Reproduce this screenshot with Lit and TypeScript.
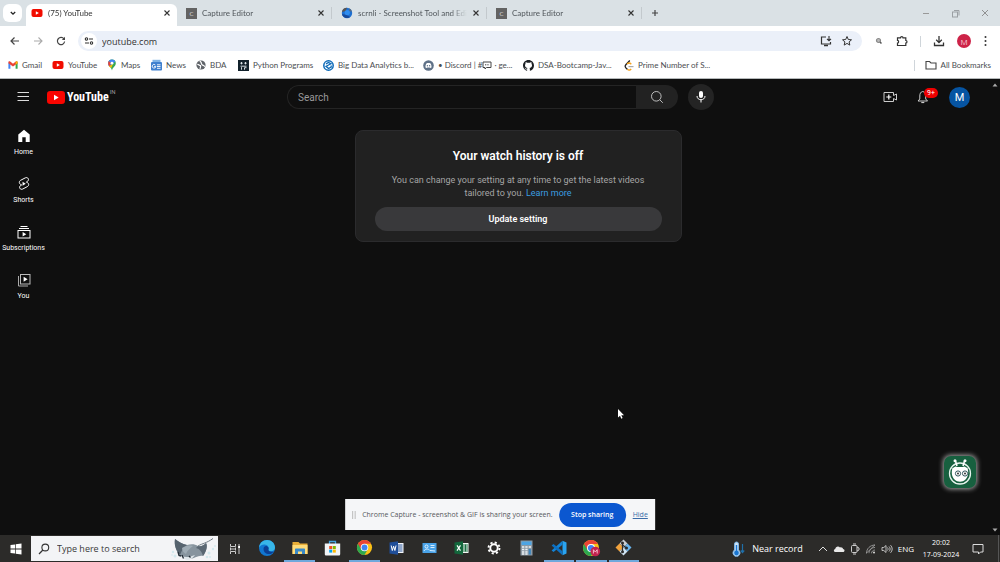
import { LitElement, html, css, svg } from "lit";
import { customElement, property } from "lit/decorators.js";

const i = (w: number, h: number, box: string, body: unknown) =>
  html`<svg width=${w} height=${h} viewBox=${box} fill="none" aria-hidden="true">${body}</svg>`;

const closeIcon = i(8, 8, "0 0 8 8", svg`<path d="M1.5 1.5l5 5M6.5 1.5l-5 5" stroke="#333" stroke-width="1.1"/>`);
const ytIcon = i(12, 12, "0 0 12 12", svg`<rect x="0.5" y="2" width="11" height="8" rx="2" fill="#f10c00"/><path d="M4.8 4.2v3.6L7.9 6z" fill="#fff"/>`);
const captureIcon = html`<span class="cap">C</span>`;
const scrnliIcon = i(12, 12, "0 0 12 12", svg`<circle cx="6" cy="6" r="5.2" fill="#1e6fd0"/><path d="M1 5a5 5 0 0 1 5-4.2L4.5 4z" fill="#5a5550"/><path d="M1 7a5 5 0 0 0 8 3L6 8z" fill="#174a9c"/><circle cx="6.3" cy="5.6" r="2.6" fill="#2f8df0"/><path d="M8 1.3a5 5 0 0 1 3 3.5L8.500 4z" fill="#5a6b7d"/>`);

const bookmarks = [
  { label: "Gmail", icon: i(10, 10, "0 0 10 10", svg`<path d="M0.4 2.4L2.400 3.900V8.700H0.400z" fill="#4285f4"/><path d="M9.600 2.400L7.600 3.900V8.700H9.600z" fill="#34a853"/><path d="M0.400 2.300C.4 1.300 1.500 1 2.200 1.600L5 3.800L7.800 1.600C8.500 1 9.600 1.300 9.600 2.300V3.200L5 6.600L.4 3.200z" fill="#ea4335"/><path d="M7.600 1.800L8.200 1.400C8.900 1.100 9.600 1.500 9.600 2.300V3.200L7.600 4.700z" fill="#fbbc04"/>`) },
  { label: "YouTube", icon: ytIcon },
  { label: "Maps", icon: i(10, 12, "0 0 10 12", svg`<path d="M5 .5a3.800 3.800 0 0 1 3.800 3.800C8.800 7.500 5.700 8 5 11.500C4.300 8 1.200 7.500 1.200 4.300A3.800 3.800 0 0 1 5 .5z" fill="#34a853"/><path d="M5 .5a3.800 3.800 0 0 1 3.400 2L2 7.300C1.500 6.500 1.200 5.500 1.200 4.300A3.800 3.800 0 0 1 5 .5z" fill="#4285f4"/><path d="M1.800 1.900L4 4L2.400 7.700C1.700 6.700 1.200 5.700 1.200 4.300C1.200 3.400 1.400 2.500 1.800 1.900z" fill="#ea4335"/><path d="M2 7.300L6 4.800L4.300 9C3.500 8 2.600 8 2 7.300z" fill="#fbbc04"/><circle cx="5" cy="4.200" r="1.400" fill="#fff"/>`) },
  { label: "News", icon: i(11, 12, "0 0 11 12", svg`<path d="M1.500 3V.8H9.500V3" fill="#7fb3e6"/><rect x="0" y="3" width="11" height="8.500" rx="1" fill="#3f80cf"/><path d="M4.300 6A1.800 1.800 0 1 0 4.800 7.500H3.200M6 5.800h3.500M6 7.500h3.500M6 9.300h3.500" stroke="#fff" stroke-width=".9"/>`) },
  { label: "BDA", icon: i(10, 10, "0 0 10 10", svg`<circle cx="5" cy="5" r="4.600" fill="#5f6368"/><path d="M1.300 4.500C3 4.200 3 5.700 4.500 5.600C5 6.800 4 7.200 4.200 8.900M4 .8C4 2 5.500 2 5.300 3C5 4 6.200 4.200 6.500 5.200C8 5 8 6.400 9 6.300" stroke="#fff" stroke-width="1.200"/>`) },
  { label: "Python Programs", icon: i(11, 11, "0 0 11 11", svg`<rect width="11" height="11" fill="#11212b"/><path d="M3.500 2v2.400M2.300 3.200h2.400M7.500 2v2.400M6.300 3.200h2.400M2.500 6.200h6M3.500 7.200v2.500M6.500 9.700V7.700H8.500" stroke="#e6eef2" stroke-width=".9"/>`) },
  { label: "Big Data Analytics b...", icon: i(11, 11, "0 0 11 11", svg`<circle cx="5.500" cy="5.500" r="4.700" stroke="#0c6ab8" stroke-width="1.500"/><path d="M3 3.800l2.500-1.300L8 3.800L5.500 5L3 6.300L5.500 8.500L8.200 7V5.500" stroke="#0c6ab8" stroke-width="1.300"/>`) },
  { label: "Discord", discord: true, icon: i(11, 11, "0 0 11 11", svg`<circle cx="5.500" cy="5.500" r="5.300" fill="#5f7187"/><path d="M2.500 7.500C2.400 5.800 2.800 4.300 3.400 3.500C4.700 2.900 6.300 2.900 7.600 3.500C8.200 4.300 8.600 5.800 8.500 7.500L7.200 8.100L6.700 7.400H4.300L3.800 8.100z" fill="#fff"/><circle cx="4.400" cy="5.700" r=".7" fill="#5f7187"/><circle cx="6.600" cy="5.700" r=".7" fill="#5f7187"/>`) },
  { label: "DSA-Bootcamp-Jav...", icon: i(11, 11, "0 0 16 16", svg`<path fill="#1b1f23" d="M8 0C3.580 0 0 3.580 0 8c0 3.540 2.290 6.530 5.470 7.590.4.070.55-.17.55-.38 0-.19-.01-.82-.01-1.490-2.010.37-2.530-.49-2.690-.94-.09-.23-.48-.94-.82-1.130-.28-.15-.68-.52-.01-.53.63-.01 1.080.58 1.230.82.72 1.210 1.870.87 2.330.66.07-.52.28-.87.51-1.070-1.780-.2-3.640-.89-3.640-3.950 0-.87.31-1.590.82-2.150-.08-.2-.36-1.020.08-2.120 0 0 .67-.21 2.200.82a7.500 7.500 0 0 1 4 0c1.530-1.040 2.200-.82 2.200-.82.44 1.100.16 1.920.08 2.120.51.56.82 1.270.82 2.150 0 3.070-1.870 3.750-3.650 3.950.29.25.54.73.54 1.480 0 1.070-.01 1.930-.01 2.200 0 .21.15.46.55.38A8 8 0 0 0 16 8c0-4.420-3.580-8-8-8z"/>`) },
  { label: "Prime Number of S...", icon: i(10, 11, "0 0 10 11", svg`<path d="M5.800.5L2 4.500C1 5.600 1 7 2 8L3.500 9.400" stroke="#222" stroke-width="1.300"/><path d="M3.400 9.300C4.600 10.500 6 10.300 7.200 9M3 4C4.600 2.600 6 2.800 7.300 4.200" stroke="#f6a21b" stroke-width="1.300"/><path d="M4.500 6.600h5" stroke="#aaa" stroke-width="1.200"/>`) },
];

const side = [
  { label: "Home", icon: i(14, 14, "0 0 14 14", svg`<path d="M7 .8L1.300 5.600V13H5.300V8.300H8.700V13H12.700V5.600z" fill="#fff"/>`) },
  { label: "Shorts", icon: i(14, 14, "0 0 24 24", svg`<path d="M17 9.200l-1-.4c-.3-.1.900-.7 1.500-1.100 2-1 2.700-3 1.900-4.700-1-1.900-3.200-2.500-5-1.600L6.300 5.600C4.800 6.400 3.900 7.800 4 9.500c.1 1.600 1.300 3 3 3.700l1 .4-1.400.8c-2 1-2.700 3-1.900 4.700 1 1.900 3.200 2.500 5 1.600l8-4.200c1.500-.8 2.400-2.200 2.300-3.800-.1-1.600-1.300-2.900-3-3.500z" stroke="#fff" stroke-width="1.700"/><path d="M9.500 8.300v6.800l5.500-3.400z" fill="#fff"/>`) },
  { label: "Subscriptions", icon: i(14, 14, "0 0 14 14", svg`<path d="M3.500 1.500h7M2 3.500h10" stroke="#fff"/><rect x="1" y="5.500" width="12" height="7.500" stroke="#fff"/><path d="M5.600 7v4.500L9.300 9.200z" fill="#fff"/>`) },
  { label: "You", icon: i(14, 14, "0 0 14 14", svg`<path d="M1.500 3v10H11" stroke="#aaa"/><rect x="3.500" y="1.500" width="9.500" height="9.500" stroke="#bbb"/><path d="M6.600 3.700v5L10.600 6.200z" fill="#fff"/>`) },
];

const chromeShapes = svg`<circle cx="9" cy="9" r="8" fill="#fbc116"/><path d="M9 9L2.100 5A8 8 0 0 0 9 17L12.500 10.800z" fill="#2da94f"/><path d="M2.100 5A8 8 0 0 1 15.900 5H9L5.500 11z" fill="#ea4335"/><circle cx="9" cy="9" r="4" fill="#fff"/><circle cx="9" cy="9" r="3.100" fill="#3f83f2"/>`;

const apps = [
  { name: "Edge", icon: i(18, 18, "0 0 18 18", svg`<circle cx="9" cy="9" r="8" fill="#1177d1"/><path d="M1 8.500C1.500 4 5 1 9 1C13.500 1 17 4.500 17 8.500C17 11 15.200 12.300 13 12.300C11 12.300 10 11.500 10.500 10.300C11.500 8.500 9.500 5.500 6.500 5.500C3.500 5.500 1.800 7 1 8.500z" fill="#38b6e8"/><path d="M5.500 10C5.500 7.500 7.500 6.600 9 7.200C10.700 8 10.900 9.500 10.400 10.500C10 12 12 13.400 15.800 12.500C13.500 16.500 5.800 16 5.500 10z" fill="#0b3f94"/>`) },
  { name: "File Explorer", on: true, icon: i(16, 16, "0 0 16 16", svg`<path d="M.5 2h6l1.500 1.500h7.500V14H.5z" fill="#e9ae38"/><path d="M.5 5h15v9H.5z" fill="#ffdc7a"/><path d="M3 14V9.500C3 8.800 3.400 8.500 4 8.500h8c.6 0 1 .3 1 1V14h-3v-2.500H6V14z" fill="#3a89c8"/>`) },
  { name: "Store", icon: i(17, 16, "0 0 17 16", svg`<path d="M5.500 4V1.500h6V4" stroke="#43a4df" stroke-width="1.300"/><path d="M.8 3.500h15.400V14c0 1-.6 1.500-1.500 1.500H2.300C1.400 15.500.8 15 .8 14z" fill="#f1f4f6"/><path d="M5.200 6h3v3h-3z" fill="#f25022"/><path d="M8.800 6h3v3h-3z" fill="#7fba00"/><path d="M5.200 9.600h3v3h-3z" fill="#00a4ef"/><path d="M8.800 9.600h3v3h-3z" fill="#ffb900"/>`) },
  { name: "Chrome", on: true, icon: i(17, 17, "0 0 18 18", chromeShapes) },
  { name: "Word", icon: i(15, 14, "0 0 15 14", svg`<path d="M7 2h7.500v10H7z" fill="#f5f7fb"/><path d="M8 4h5.500M8 6h5.500M8 8h5.500M8 10h5.500" stroke="#2a5699"/><path d="M.5 1.500L9 .3V13.700L.5 12.500z" fill="#1f4e99"/><path d="M2.200 4.500L3.300 9.500L4.600 5.200L5.900 9.500L7 4.500" stroke="#fff"/>`) },
  { name: "Contacts", icon: i(15, 12, "0 0 15 12", svg`<rect x=".5" y="1" width="14" height="10" fill="#4aa3e8"/><circle cx="4.500" cy="4.500" r="1.500" stroke="#e3f3ff"/><path d="M2 9C3 6.500 6.500 6.500 8 8.500L13 9M8.500 3.500h4M8.500 5.500h4" stroke="#d8eeff"/>`) },
  { name: "Excel", icon: i(15, 14, "0 0 15 14", svg`<path d="M7 2h7.500v10H7z" fill="#f2f8f4"/><path d="M11.500 3.500v7M9 4h5M9 6h5M9 8h5M9 10h5" stroke="#1c7044"/><path d="M.5 1.500L9 .3V13.700L.5 12.500z" fill="#13673c"/><path d="M3 4.300l3.500 5.300M6.500 4.300L3 9.600" stroke="#fff" stroke-width="1.200"/>`) },
  { name: "Settings", icon: i(14, 14, "0 0 14 14", svg`<circle cx="7" cy="7" r="3.700" stroke="#fff" stroke-width="1.900"/><circle cx="7" cy="7" r="5.500" stroke="#fff" stroke-width="1.900" stroke-dasharray="2.160 2.160"/>`) },
  { name: "Calculator", icon: i(13, 16, "0 0 13 16", svg`<rect x=".5" y=".5" width="12" height="15" fill="#8d9aa5"/><rect x="1.500" y="1.500" width="10" height="3.500" fill="#4da4e4"/><path d="M2 7h2.300M5.300 7h2.300M8.700 7H11M2 9.500h2.300M5.300 9.500h2.300M2 12h2.300M5.300 12h2.300M2 14h2.300M5.300 14h2.300" stroke="#eef2f5" stroke-width="1.500"/><path d="M9.800 9v5.500" stroke="#3e86be" stroke-width="2.200"/>`) },
  { name: "Visual Studio Code", on: true, icon: i(16, 16, "0 0 16 16", svg`<path d="M11.500 .7L15.500 2.500V13.500L11.500 15.300z" fill="#2aa4f0"/><path d="M11.500.7V4.800L2.500 12L.6 10.500z" fill="#1283d6"/><path d="M11.500 15.300V11.200L2.500 4L.6 5.500z" fill="#0d6fc0"/>`) },
  { name: "Chrome profile M", on: true, icon: i(19, 18, "0 0 19 18", svg`${chromeShapes}<circle cx="13.300" cy="12.500" r="4.800" fill="#c2224e"/><path d="M11.400 14.500V10.700L13.300 13L15.200 10.700V14.500" stroke="#f3b8c6"/>`) },
  { name: "Git", on: true, icon: i(17, 17, "0 0 17 17", svg`<path d="M8.500.5L12.500 4.500L8.500 8.500L4.500 4.500z" fill="#c9ced3"/><path d="M4.500 4.500L8.500 8.500L4.500 12.500L.5 8.500z" fill="#f0a23c"/><path d="M12.500 4.500L16.500 8.500L12.500 12.500L8.500 8.500z" fill="#69b5ee"/><path d="M8.500 8.500L12.500 12.500L8.500 16.500L4.500 12.500z" fill="#cfe3f2"/><path d="M7.500 3.500v9M7.500 6l4 3" stroke="#2b2b2b" stroke-width="1.200"/><circle cx="7.500" cy="4" r="1.500" fill="#2b2b2b"/><circle cx="11.500" cy="9" r="1.500" fill="#2b2b2b"/><circle cx="7.500" cy="12.800" r="1.500" fill="#2b2b2b"/>`) },
];

const ray = i(48, 24, "0 0 48 24", svg`
  <g fill="#d3e9ee"><circle cx="3" cy="15" r="1.200"/><circle cx="5" cy="19" r="1.500"/><circle cx="2" cy="18" r=".8"/><circle cx="39" cy="16" r="1.500"/><circle cx="43" cy="12" r="1.200"/><circle cx="37" cy="20" r="1.300"/><circle cx="45" cy="9" r=".9"/><circle cx="40" cy="20" r=".9"/></g>
  <path d="M28 9C33 6 36 6.500 43 1.500" stroke="#6f7a82" stroke-width="1"/>
  <path d="M5 2C8 4 12 7 17 8C21 7 25 7 28 9C31 10 34 8 36 6C38 9 36 15 33 19C28 18 25 22 18 22C14 22 11 19 9 17C6 13 4 8 5 2z" fill="#87949e"/>
  <path d="M5 2C8 4 12 7 17 8C14 10 12 13 10 18C6 14 4 8 5 2z" fill="#56636e"/>
  <path d="M28 9C31 10 34 8 36 6C38 9 36 15 33 19C32 15 30 12 26 11z" fill="#5b6873"/>
  <path d="M12 11C15 9 19 8 23 9C20 11 17 14 16 17C14 16 12 14 12 11z" fill="#9eabb4"/>
  <path d="M12 19C16 21 20 20 25 18C23 21 20 23 17 23C14 22 13 21 12 19z" fill="#dfe6ea"/>
  <path d="M8 15l1 3.500l2 .5M12 18l1.500 3.500M19 19l1.500 1.500" stroke="#222c35" stroke-width="1.300"/>`);

@customElement("browser-tab")
class BrowserTab extends LitElement {
  @property({ type: Boolean, reflect: true }) active = false;
  @property() label = "";
  @property({ attribute: false }) icon: unknown;
  static styles = css`
    :host { width: 155px; height: 22px; display: block; flex: none; }
    .tab { display: flex; align-items: center; gap: 5px; height: 12px; margin-top: 3px; padding: 0 6px 0 9px; border-right: 1px solid #c3c9cd; box-sizing: border-box; }
    :host([active]) .tab { margin: 0 0 0 4px; height: 22px; padding: 0 6px 4px 5px; background: #fff; border: 0; border-radius: 6px 6px 0 0; }
    .label { flex: 1; overflow: hidden; white-space: nowrap; font-size: 8px; line-height: 12px; color: #50565b; mask-image: linear-gradient(90deg, #000 85%, transparent); }
    :host([active]) .label { color: #333; }
    svg { display: block; flex: none; }
    button { border: 0; background: none; padding: 0; height: 8px; width: 8px; flex: none; }
    .cap { width: 11px; height: 11px; flex: none; background: #636363; color: #ddd; font-size: 6px; line-height: 11px; text-align: center; }
  `;
  render() {
    return html`<div class="tab">${this.icon}<span class="label">${this.label}</span><button aria-label="Close tab">${closeIcon}</button></div>`;
  }
}

@customElement("app-root")
class AppRoot extends LitElement {
  static styles = css`
    :host { display: flex; flex-direction: column; height: 100vh; position: relative; overflow: hidden; font-family: "Open Sans", "Noto Sans", sans-serif; background: #0f0f0f; color: #fff; }
    * { box-sizing: border-box; }
    button { border: 0; padding: 0; margin: 0; background: none; color: inherit; font: inherit; display: flex; align-items: center; justify-content: center; }
    a { color: inherit; text-decoration: none; }
    svg { display: block; flex: none; }
    input { min-width: 0; border: 0; outline: 0; padding: 0; background: none; font: inherit; color: inherit; }
    .row { display: flex; align-items: center; }
    .grow { flex: 1; }

    .strip, .marks { font-family: Lato, "Open Sans", sans-serif; }
    .strip { display: flex; height: 26px; padding-top: 4px; background: #dae1e5; }
    .tabsearch { width: 19px; height: 18px; margin: 0 0 0 3px; background: #fff; border-radius: 6px; }
    .plus { width: 26px; height: 18px; }
    .win { display: flex; height: 18px; gap: 21px; align-items: center; padding-right: 11px; }
    .bar { display: flex; align-items: center; height: 30px; padding: 0 12px 0 9px; background: #fff; }
    .nav { display: flex; gap: 13px; padding-right: 12px; }
    .omni { flex: 1; display: flex; align-items: center; height: 20px; border-radius: 10px; background: #ebf0f9; padding: 0 9px 0 3px; color: #333; font-size: 9px; gap: 9px; }
    .site { flex: 1; display: flex; align-items: center; gap: 5px; }
    .omni input { flex: 1; height: 16px; }
    .tune { width: 16px; height: 16px; border-radius: 8px; background: #fff; }
    .tools { display: flex; align-items: center; gap: 12px; padding-left: 12px; }
    .vline { width: 1px; height: 11px; background: #cfd5da; }
    .me { width: 14px; height: 14px; border-radius: 7px; background: #cd2348; color: #f6c6d0; font-size: 8px; }
    .marks { display: flex; align-items: center; justify-content: space-between; height: 23px; padding: 0 9px 4px 8px; background: #fff; border-bottom: 1px solid #b5b9ba; color: #4a4d50; font-size: 8px; line-height: 10px; white-space: nowrap; }
    .marks nav { display: grid; grid-template-columns: 44px 55px 44px 45px 42px 85px 100px 100px 101px 90px; }
    .marks a { display: flex; align-items: center; gap: 4px; }
    .all { gap: 10px; }
    .bubble { display: inline-block; vertical-align: -2px; }

    .page { flex: 1; display: flex; min-height: 0; font-family: Roboto, sans-serif; }
    .content { flex: 1; }
    .scroll { width: 11px; display: flex; flex-direction: column; justify-content: space-between; align-items: center; padding: 4px 0 3px; }
    header { display: grid; grid-template-columns: 1fr auto 1fr; align-items: center; height: 36px; padding: 0 19px 0 16px; }
    .brand { display: flex; align-items: center; gap: 17px; }
    .logo { display: flex; align-items: center; gap: 1px; font: bold 12px/18px "Liberation Sans Narrow", "Roboto Condensed", Roboto, sans-serif; }
    .logo sup { font: 6px/8px Roboto, sans-serif; color: #999; align-self: flex-start; }
    .search { display: flex; align-items: center; padding-left: 15px; }
    .search input { width: 349px; height: 24px; border: 1px solid #242424; border-right: 0; border-radius: 12px 0 0 12px; padding-left: 10px; font-size: 10px; }
    .search input::placeholder { color: #999; opacity: 1; }
    .go { width: 42px; height: 24px; border-radius: 0 12px 12px 0; background: #222; }
    .mic { width: 26px; height: 26px; border-radius: 13px; background: #242424; margin-left: 10px; }
    .right { display: flex; justify-content: flex-end; align-items: center; gap: 19px; }
    .bell { position: relative; }
    .badge { position: absolute; left: 7px; top: -2px; width: 14px; height: 10px; border-radius: 5px; background: #e00; font-size: 7px; line-height: 10px; text-align: center; }
    .avatar { width: 21px; height: 21px; border-radius: 11px; background: #0654a2; font-size: 11px; }
    .below { display: flex; align-items: flex-start; }
    aside { width: 47px; padding-top: 2px; }
    aside a { display: flex; flex-direction: column; align-items: center; gap: 5px; height: 48px; padding-top: 12px; font-size: 7px; line-height: 9px; }
    main { flex: 1; display: flex; justify-content: center; padding-top: 15px; }
    .card { width: 327px; border: 1px solid #2b2b2d; border-radius: 8px; background: #212121; padding: 17px 19px 10px; text-align: center; color: #a5a5a5; font-size: 9px; line-height: 13px; }
    h1 { margin: 0 0 10px; color: #fff; font-size: 12px; line-height: 16px; font-weight: 600; }
    p { margin: 0 auto 7px; max-width: 270px; }
    p a { color: #3a9de0; }
    .update { width: 100%; height: 24px; border-radius: 12px; background: #39393b; color: #fff; font-size: 9px; font-weight: 600; }

    .share { position: absolute; left: 50%; bottom: 32px; transform: translateX(-50%); display: flex; align-items: center; height: 31px; gap: 6px; padding: 0 7px 0 6px; background: #f5f6f8; color: #55585c; font-size: 7px; white-space: nowrap; }
    .stop { width: 67px; height: 24px; border-radius: 12px; background: #0b57d0; color: #fff; font-weight: 600; }
    .share a { color: #3a6ba8; text-decoration: underline; padding-left: 1px; }
    .bot { position: absolute; right: 24px; bottom: 74px; width: 32px; height: 32px; border-radius: 7px; background: #17603f; box-shadow: 0 0 5px 1px #aaa; }
    .cursor { position: absolute; left: 617px; top: 408px; }

    footer { display: flex; height: 27px; background: #2c2b29; font-size: 9px; white-space: nowrap; }
    .start { width: 31px; }
    .find { display: flex; align-items: center; width: 187px; height: 25px; margin-top: 1px; background: #f3f4f6; color: #3a3a3a; padding-left: 7px; gap: 7px; }
    .find input { flex: 1; }
    .find input::placeholder { color: #3a3a3a; opacity: 1; }
    .view { width: 33px; }
    .apps { display: flex; width: 389px; }
    .apps button { flex: 1; border-bottom: 2px solid transparent; }
    .apps .on { border-image: linear-gradient(90deg, transparent 3px, #6fa8dc 3px, #6fa8dc calc(100% - 3px), transparent calc(100% - 3px)) 2; }
    .tray { flex: 1; display: flex; justify-content: flex-end; align-items: center; }
    .weather { gap: 7px; margin-right: 15px; }
    .status { gap: 5px; font-size: 8px; }
    .clock { width: 54px; text-align: center; font-size: 7px; line-height: 12px; }
    .note { width: 20px; margin-right: 10px; height: 27px; }
    .edge { width: 2px; height: 27px; border-left: 1px solid #555; }
  `;

  render() {
    return html`
      <div class="strip">
        <button class="tabsearch" aria-label="Search tabs">${i(8, 8, "0 0 8 8", svg`<path d="M1.800 3l2.200 2.200L6.200 3" stroke="#222" stroke-width="1.300"/>`)}</button>
        <browser-tab active label="(75) YouTube" .icon=${ytIcon}></browser-tab>
        <browser-tab label="Capture Editor" .icon=${captureIcon}></browser-tab>
        <browser-tab label="scrnli - Screenshot Tool and Edi" .icon=${scrnliIcon}></browser-tab>
        <browser-tab label="Capture Editor" .icon=${captureIcon}></browser-tab>
        <button class="plus" aria-label="New tab">${i(8, 8, "0 0 8 8", svg`<path d="M4 1v6M1 4h6" stroke="#444" stroke-width="1.200"/>`)}</button>
        <span class="grow"></span>
        <div class="win">
          <button aria-label="Minimise">${i(8, 8, "0 0 8 8", svg`<path d="M1 4.500h6" stroke="#999"/>`)}</button>
          <button aria-label="Restore">${i(9, 9, "0 0 9 9", svg`<rect x="1.500" y="3" width="5" height="5" stroke="#9a9fa3"/><path d="M3 1.500h5v5" stroke="#9a9fa3"/>`)}</button>
          <button aria-label="Close">${i(8, 8, "0 0 8 8", svg`<path d="M1 1l6 6M7 1L1 7" stroke="#888" stroke-width=".9"/>`)}</button>
        </div>
      </div>
      <div class="bar">
        <div class="nav">
          <button aria-label="Back">${i(11, 10, "0 0 11 10", svg`<path d="M10 5H2.500M5.500 1.500L2 5l3.500 3.500" stroke="#444" stroke-width="1.200"/>`)}</button>
          <button aria-label="Forward">${i(10, 10, "0 0 10 10", svg`<path d="M1 5h7.500M5.500 1.500L9 5L5.500 8.500" stroke="#aaa" stroke-width="1.100"/>`)}</button>
          <button aria-label="Reload">${i(10, 10, "0 0 10 10", svg`<path d="M8 3A3.600 3.600 0 1 0 8.600 5.500" stroke="#444" stroke-width="1.200"/><path d="M9 .8V4H5.800z" fill="#444"/>`)}</button>
        </div>
        <div class="omni">
          <div class="site">
            <button class="tune" aria-label="Site information">${i(10, 10, "0 0 10 10", svg`<circle cx="2.500" cy="3" r="1.200" stroke="#333" stroke-width="1.100"/><path d="M5 3h4M1 7h4" stroke="#333" stroke-width="1.200"/><circle cx="7.500" cy="7" r="1.200" stroke="#333" stroke-width="1.100"/>`)}</button>
            <input aria-label="Address" value="youtube.com" />
          </div>
          <button aria-label="Install">${i(12, 12, "0 0 12 12", svg`<path d="M6 2H1.500v7h9V7" stroke="#333" stroke-width="1.200"/><path d="M4 10.500h4" stroke="#333" stroke-width="1.500"/><path d="M9 1v4.500M7 3.800l2 2l2-2" stroke="#333" stroke-width="1.100"/>`)}</button>
          <button aria-label="Bookmark">${i(12, 12, "0 0 12 12", svg`<path d="M6 1.500l1.300 3l3.200.3l-2.400 2.100l.7 3.200L6 8.400L3.200 10.100l.7-3.200L1.500 4.800l3.200-.3z" stroke="#333"/>`)}</button>
        </div>
        <div class="tools">
          <button aria-label="Extension">${i(10, 10, "0 0 10 10", svg`<circle cx="4.500" cy="4.500" r="2" stroke="#888" stroke-width="1.200" fill="#bbb"/><path d="M6 6l1.500 1.500" stroke="#555" stroke-width="1.500"/>`)}</button>
          <button aria-label="Extensions">${i(12, 12, "0 0 12 12", svg`<path d="M1.500 2.800H4.500C4.500 1.200 7 1.200 7 2.800H9.800V5.500C11.400 5.500 11.400 8 9.800 8V10.500H1.500V8C3 8 3 5.300 1.500 5.300z" stroke="#333" stroke-width="1.200"/>`)}</button>
          <span class="vline"></span>
          <button aria-label="Downloads">${i(12, 12, "0 0 12 12", svg`<path d="M6 1v6.500M3.200 4.800L6 7.600l2.800-2.800M1.500 7.500v3h9v-3" stroke="#333" stroke-width="1.300"/>`)}</button>
          <button class="me" aria-label="Profile">M</button>
          <button aria-label="Menu">${i(5, 12, "0 0 5 12", svg`<g fill="#333"><circle cx="2.500" cy="2" r="1"/><circle cx="2.500" cy="6" r="1"/><circle cx="2.500" cy="10" r="1"/></g>`)}</button>
        </div>
      </div>
      <div class="marks">
        <nav>${bookmarks.map((b) => html`<a href="#">${b.icon}<span>${b.discord ? html`• Discord | #${this.bubble} · ge...` : b.label}</span></a>`)}</nav>
        <div class="row all"><span class="vline"></span><a href="#">${i(12, 10, "0 0 12 10", svg`<path d="M1 1.500h3.500L6 3h5v6H1z" stroke="#444" stroke-width="1.100"/>`)}All Bookmarks</a></div>
      </div>
      <div class="page">
        <div class="content">
          <header>
            <div class="brand">
              <button aria-label="Guide">${i(14, 12, "0 0 14 12", svg`<path d="M1.500 1.500h11.500M1.500 5.500h11.500M1.500 9.500h11.500" stroke="#ddd"/>`)}</button>
              <a class="logo" href="#">${i(19, 13, "0 0 19 13", svg`<rect width="18" height="13" rx="3.200" fill="#f90500"/><path d="M7 3.700v5.600L11.700 6.500z" fill="#fff"/>`)}<span>YouTube</span><sup>IN</sup></a>
            </div>
            <div class="search">
              <input aria-label="Search" placeholder="Search" />
              <button class="go" aria-label="Search">${i(14, 14, "0 0 14 14", svg`<circle cx="6.300" cy="6.300" r="4.800" stroke="#ccc" stroke-width=".9"/><path d="M9.800 9.800l3 3" stroke="#ccc" stroke-width=".9"/>`)}</button>
              <button class="mic" aria-label="Search with your voice">${i(12, 14, "0 0 12 14", svg`<rect x="4" y="1" width="4" height="7" rx="2" fill="#fff"/><path d="M2 6c0 5 8 5 8 0M6 9.700V12.500" stroke="#fff"/>`)}</button>
            </div>
            <div class="right">
              <button aria-label="Create">${i(15, 12, "0 0 15 12", svg`<path d="M1 1.500h9.500v3L13.500 3v6l-3-1.500v3H1z" stroke="#ccc"/><path d="M5.800 3.500v5M3.300 6h5" stroke="#fff" stroke-width="1.200"/>`)}</button>
              <button class="bell" aria-label="Notifications">${i(13, 14, "0 0 13 14", svg`<path d="M5.700 1.500C3.500 2 2.800 3.700 2.800 6v3L1 11h9.500L8.700 9V6C8.700 3.700 8 2 5.700 1.500z" stroke="#ccc"/><path d="M4.300 12.500h3" stroke="#ccc" stroke-width="1.200"/>`)}<span class="badge">9+</span></button>
              <button class="avatar" aria-label="Account">M</button>
            </div>
          </header>
          <div class="below">
            <aside>${side.map((s) => html`<a href="#">${s.icon}<span>${s.label}</span></a>`)}</aside>
            <main>
              <section class="card">
                <h1>Your watch history is off</h1>
                <p>You can change your setting at any time to get the latest videos tailored to you. <a href="#">Learn more</a></p>
                <button class="update">Update setting</button>
              </section>
            </main>
          </div>
        </div>
        <div class="scroll">
          ${i(6, 4, "0 0 6 4", svg`<path d="M.5 3.500L3 .5L5.500 3.500z" fill="#aaa"/>`)}
          ${i(6, 4, "0 0 6 4", svg`<path d="M.5.5L3 3.500L5.500.5z" fill="#aaa"/>`)}
        </div>
      </div>
      <footer>
        <button class="start" aria-label="Start">${i(12, 12, "0 0 12 12", svg`<path d="M.5 2L5 1.400V5.600H.5zM5.700 1.300L11.500.5V5.600H5.700zM.5 6.400H5v4.200L.5 10zM5.700 6.400h5.800v5.100L5.700 10.700z" fill="#fff"/>`)}</button>
        <label class="find">${i(12, 12, "0 0 12 12", svg`<circle cx="7.300" cy="4.500" r="3.400" stroke="#333" stroke-width="1.100"/><path d="M4.900 7L1 11" stroke="#333" stroke-width="1.200"/>`)}<input aria-label="Search Windows" placeholder="Type here to search" />${ray}</label>
        <button class="view" aria-label="Task view">${i(12, 12, "0 0 12 12", svg`<path d="M1.500 1v2.500h5V1M1.500 11V8.500h5V11M1.500 4.500v3M6.500 4.500v3M1.500 6h5M10 1v10" stroke="#ccc"/><path d="M9.200 4h1.800" stroke="#fff" stroke-width="2"/>`)}</button>
        <div class="apps">${apps.map((a) => html`<button class=${a.on ? "on" : ""} aria-label=${a.name}>${a.icon}</button>`)}</div>
        <div class="tray">
          <div class="row weather">${i(13, 16, "0 0 13 16", svg`<path d="M2.500 9V3a2 2 0 0 1 4 0v6a3.500 3.500 0 1 1-4 0z" fill="#cfe4f5" stroke="#7fb6e6"/><path d="M4.500 4v7" stroke="#1976d2" stroke-width="1.500"/><circle cx="4.500" cy="12" r="2.400" fill="#1976d2"/><path d="M10.500 3v8M8.800 9.500l1.700 2l1.700-2" stroke="#1f6fa8" stroke-width="1.200"/>`)}<span>Near record</span></div>
          <div class="row status">
            ${i(10, 8, "0 0 10 8", svg`<path d="M1 6l4-4l4 4" stroke="#ddd"/>`)}
            ${i(12, 9, "0 0 12 9", svg`<path d="M2.500 8C.5 8 .3 5.500 2.200 5C2.500 2.500 5.500 1.500 7 3.500C8.500 3 10 4 10 5C12 5.200 12 8 10 8z" fill="#e8e8e8"/>`)}
            ${i(10, 12, "0 0 10 12", svg`<rect x="1.500" y="2.500" width="5.500" height="7" rx="1" stroke="#ccc"/><path d="M3 1h3M3 11h3M7 4l2 1v2L7 8" stroke="#ccc"/>`)}
            ${i(11, 10, "0 0 11 10", svg`<path d="M1.500 9C1.500 5 5 1 10 1M4 9.200C4 6.500 6.500 3.500 10 3.500M6.500 9.300C6.500 7.500 8 6 10 6M1 9.500L10 .8" stroke="#aaa" stroke-width=".8"/><circle cx="9" cy="8.500" r="1" fill="#ddd"/>`)}
            ${i(12, 10, "0 0 12 10", svg`<path d="M1 3.500h1.800L5 1.500v7L2.800 6.500H1zM6.500 3.500C7.300 4.500 7.300 5.500 6.500 6.500M8 2.500C9.500 4 9.500 6 8 7.500M9.500 1.200C11.700 3.500 11.700 6.500 9.500 8.800" stroke="#ccc" stroke-width=".9"/>`)}
            <span>ENG</span>
          </div>
          <div class="clock"><div>20:02</div><div>17-09-2024</div></div>
          <button class="note" aria-label="Notifications">${i(12, 12, "0 0 12 12", svg`<path d="M1 1.500h10v7.500H8.500L6.500 11V9H1z" stroke="#ddd"/>`)}</button>
          <span class="edge"></span>
        </div>
      </footer>
      <div class="share" role="dialog" aria-label="Screen sharing">
        ${i(5, 8, "0 0 5 8", svg`<path d="M1.500 0v8M4 0v8" stroke="#bbb"/>`)}
        <span>Chrome Capture - screenshot &amp; GIF is sharing your screen.</span>
        <button class="stop">Stop sharing</button>
        <a href="#">Hide</a>
      </div>
      <button class="bot" aria-label="Assistant">${i(26, 28, "0 0 26 28", svg`<circle cx="13" cy="15.500" r="10.500" stroke="#e8f4ef" stroke-width="1.300"/><path d="M10 8L8.500 3M16 8L17.500 3" stroke="#fff" stroke-width="1.500"/><circle cx="8" cy="2.800" r="1.500" fill="#fff"/><circle cx="18" cy="2.800" r="1.500" fill="#fff"/><path d="M5.500 10C7 9.500 8.500 7.500 10 9H16C17.500 7.500 19 9.500 20.500 10C22 15 21 19 18.500 21.500C15.500 24.500 10.500 24.500 7.500 21.500C5 19 4 15 5.500 10z" fill="#fff"/><circle cx="11" cy="15.500" r="2.600" stroke="#35575e" fill="#fff"/><circle cx="18" cy="15.500" r="2.600" stroke="#35575e" fill="#fff"/><circle cx="11" cy="15.500" r=".9" fill="#222"/><circle cx="18" cy="15.500" r=".9" fill="#222"/>`)}</button>
      <svg class="cursor" width="8" height="12" viewBox="0 0 8 12" aria-hidden="true"><path d="M1 1v8.500l2-1.800l1.300 3l1.300-.6l-1.300-2.800H7z" fill="#fff"/></svg>
    `;
  }

  bubble = html`<svg class="bubble" width="10" height="9" viewBox="0 0 10 9" fill="none" aria-hidden="true"><path d="M1 1h8v5.500H4.500L3 8V6.500H1z" stroke="#444"/><path d="M3 3.800h4" stroke="#444" stroke-dasharray="1 .7"/></svg>`;
}
